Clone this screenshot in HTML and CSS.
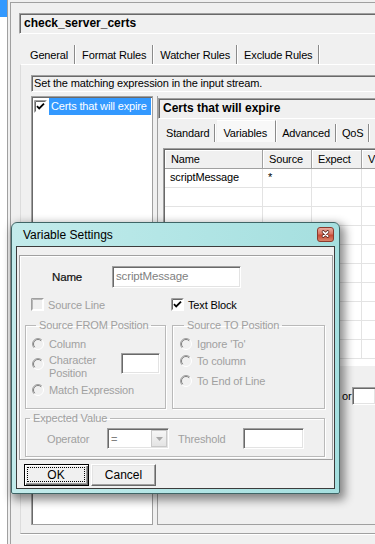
FILE: index.html
```html
<!DOCTYPE html>
<html>
<head>
<meta charset="utf-8">
<title>Variable Settings</title>
<link rel="stylesheet" href="styles.css">
</head>
<body>
<div class="app">
  <div class="side"><div class="side-sel"></div></div>
  <div class="main">
    <div class="title-field">check_server_certs</div>
    <div class="tabs">
      <div class="tab">General</div>
      <div class="tab">Format Rules</div>
      <div class="tab">Watcher Rules</div>
      <div class="tab">Exclude Rules</div>
    </div>
    <div class="page">
      <div class="hint">Set the matching expression in the input stream.</div>
      <div class="split">
        <div class="listbox">
          <div class="item">
            <svg class="cbx" width="13" height="13" viewBox="0 0 13 13"><rect width="13" height="13" fill="#fff"/><path d="M0.5 12.5V0.5H12.5" stroke="#a0a0a0" fill="none"/><path d="M1.5 11.5V1.5H11.5" stroke="#696969" fill="none"/><path d="M3 6.2L5.2 8.5L10 3.6" stroke="#000" stroke-width="1.8" fill="none"/></svg>
            <span class="sel">Certs that will expire</span>
          </div>
        </div>
        <div class="rpanel">
          <div class="rhead">Certs that will expire</div>
          <div class="rtabs">
            <div class="rtab">Standard</div>
            <div class="rtab active">Variables</div>
            <div class="rtab">Advanced</div>
            <div class="rtab">QoS</div>
          </div>
          <div class="grid">
            <div class="grow ghead"><div class="gc c1">Name</div><div class="gc c2">Source</div><div class="gc c3">Expect</div><div class="gc c4">V</div></div>
            <div class="grow"><div class="gc c1">scriptMessage</div><div class="gc c2">*</div><div class="gc c3"></div><div class="gc c4"></div></div>
            <div class="grow"><div class="gc c1"></div><div class="gc c2"></div><div class="gc c3"></div><div class="gc c4"></div></div>
            <div class="grow"><div class="gc c1"></div><div class="gc c2"></div><div class="gc c3"></div><div class="gc c4"></div></div>
            <div class="grow"><div class="gc c1"></div><div class="gc c2"></div><div class="gc c3"></div><div class="gc c4"></div></div>
            <div class="grow"><div class="gc c1"></div><div class="gc c2"></div><div class="gc c3"></div><div class="gc c4"></div></div>
            <div class="grow"><div class="gc c1"></div><div class="gc c2"></div><div class="gc c3"></div><div class="gc c4"></div></div>
            <div class="grow"><div class="gc c1"></div><div class="gc c2"></div><div class="gc c3"></div><div class="gc c4"></div></div>
            <div class="grow"><div class="gc c1"></div><div class="gc c2"></div><div class="gc c3"></div><div class="gc c4"></div></div>
            <div class="grow"><div class="gc c1"></div><div class="gc c2"></div><div class="gc c3"></div><div class="gc c4"></div></div>
            <div class="grow"><div class="gc c1"></div><div class="gc c2"></div><div class="gc c3"></div><div class="gc c4"></div></div>
          </div>
          <div class="or-row"><span>or</span><div class="field or-field"></div></div>
        </div>
      </div>
    </div>
  </div>
</div>

<div class="dialog">
  <div class="dtitle">
    <span class="dtitle-text">Variable Settings</span>
    <svg class="close" width="17" height="15" viewBox="0 0 17 15"><defs><linearGradient id="cg" x1="0" y1="0" x2="0" y2="1"><stop offset="0" stop-color="#eab0a4"/><stop offset="0.45" stop-color="#d87562"/><stop offset="0.55" stop-color="#c64a35"/><stop offset="1" stop-color="#dc8a70"/></linearGradient></defs><rect x="0.5" y="0.5" width="16" height="14" rx="2.5" fill="url(#cg)" stroke="#8a3b2e"/><path d="M6.3 4.8L10.7 9.2M10.7 4.8L6.3 9.2" stroke="#5a2219" stroke-width="3.2" stroke-linecap="round"/><path d="M6.3 4.8L10.7 9.2M10.7 4.8L6.3 9.2" stroke="#fff" stroke-width="1.7" stroke-linecap="round"/></svg>
  </div>
  <div class="client">
    <div class="dpanel">
      <div class="name-row">
        <span class="name-label">Name</span>
        <div class="field name-input">scriptMessage</div>
      </div>
      <div class="check-row">
        <div class="chk dis">
          <svg class="cbx" width="13" height="13" viewBox="0 0 13 13"><rect width="13" height="13" fill="#fff"/><path d="M0.5 12.5V0.5H12.5" stroke="#a0a0a0" fill="none"/><path d="M1.5 11.5V1.5H11.5" stroke="#b8b8b8" fill="none"/><rect x="2" y="2" width="9" height="9" fill="#f0f0f0"/></svg>
          <span>Source Line</span>
        </div>
        <div class="chk">
          <svg class="cbx" width="13" height="13" viewBox="0 0 13 13"><rect width="13" height="13" fill="#fff"/><path d="M0.5 12.5V0.5H12.5" stroke="#a0a0a0" fill="none"/><path d="M1.5 11.5V1.5H11.5" stroke="#696969" fill="none"/><path d="M3 6.2L5.2 8.5L10 3.6" stroke="#000" stroke-width="1.8" fill="none"/></svg>
          <span>Text Block</span>
        </div>
      </div>
      <div class="groups">
        <fieldset class="grp from">
          <legend>Source FROM Position</legend>
          <div class="opt o1">
            <svg class="radio" width="12" height="12" viewBox="0 0 12 12"><circle cx="6" cy="6" r="5" fill="#f0f0f0"/><path d="M9.9 2.1A5.5 5.5 0 0 0 2.1 9.9" fill="none" stroke="#a0a0a0"/><path d="M9.2 2.8A4.5 4.5 0 0 0 2.8 9.2" fill="none" stroke="#808080"/><path d="M2.1 9.9A5.5 5.5 0 0 0 9.9 2.1" fill="none" stroke="#fff"/></svg>
            <span>Column</span>
          </div>
          <div class="opt o2">
            <svg class="radio" width="12" height="12" viewBox="0 0 12 12"><circle cx="6" cy="6" r="5" fill="#f0f0f0"/><path d="M9.9 2.1A5.5 5.5 0 0 0 2.1 9.9" fill="none" stroke="#a0a0a0"/><path d="M9.2 2.8A4.5 4.5 0 0 0 2.8 9.2" fill="none" stroke="#808080"/><path d="M2.1 9.9A5.5 5.5 0 0 0 9.9 2.1" fill="none" stroke="#fff"/></svg>
            <span class="two">Character<br>Position</span>
            <div class="field char-input"></div>
          </div>
          <div class="opt o3">
            <svg class="radio" width="12" height="12" viewBox="0 0 12 12"><circle cx="6" cy="6" r="5" fill="#f0f0f0"/><path d="M9.9 2.1A5.5 5.5 0 0 0 2.1 9.9" fill="none" stroke="#a0a0a0"/><path d="M9.2 2.8A4.5 4.5 0 0 0 2.8 9.2" fill="none" stroke="#808080"/><path d="M2.1 9.9A5.5 5.5 0 0 0 9.9 2.1" fill="none" stroke="#fff"/></svg>
            <span>Match Expression</span>
          </div>
        </fieldset>
        <fieldset class="grp to">
          <legend>Source TO Position</legend>
          <div class="opt t1">
            <svg class="radio" width="12" height="12" viewBox="0 0 12 12"><circle cx="6" cy="6" r="5" fill="#f0f0f0"/><path d="M9.9 2.1A5.5 5.5 0 0 0 2.1 9.9" fill="none" stroke="#a0a0a0"/><path d="M9.2 2.8A4.5 4.5 0 0 0 2.8 9.2" fill="none" stroke="#808080"/><path d="M2.1 9.9A5.5 5.5 0 0 0 9.9 2.1" fill="none" stroke="#fff"/></svg>
            <span>Ignore 'To'</span>
          </div>
          <div class="opt t2">
            <svg class="radio" width="12" height="12" viewBox="0 0 12 12"><circle cx="6" cy="6" r="5" fill="#f0f0f0"/><path d="M9.9 2.1A5.5 5.5 0 0 0 2.1 9.9" fill="none" stroke="#a0a0a0"/><path d="M9.2 2.8A4.5 4.5 0 0 0 2.8 9.2" fill="none" stroke="#808080"/><path d="M2.1 9.9A5.5 5.5 0 0 0 9.9 2.1" fill="none" stroke="#fff"/></svg>
            <span>To column</span>
          </div>
          <div class="opt t3">
            <svg class="radio" width="12" height="12" viewBox="0 0 12 12"><circle cx="6" cy="6" r="5" fill="#f0f0f0"/><path d="M9.9 2.1A5.5 5.5 0 0 0 2.1 9.9" fill="none" stroke="#a0a0a0"/><path d="M9.2 2.8A4.5 4.5 0 0 0 2.8 9.2" fill="none" stroke="#808080"/><path d="M2.1 9.9A5.5 5.5 0 0 0 9.9 2.1" fill="none" stroke="#fff"/></svg>
            <span>To End of Line</span>
          </div>
        </fieldset>
      </div>
      <fieldset class="grp expected">
        <legend>Expected Value</legend>
        <div class="exp-row">
          <span class="op-label">Operator</span>
          <div class="field combo"><span class="combo-val">=</span><span class="combo-btn"><svg width="7" height="4" viewBox="0 0 7 4"><path d="M0 0H7L3.5 4Z" fill="#a8a8a8"/></svg></span></div>
          <span class="th-label">Threshold</span>
          <div class="field th-input"></div>
        </div>
      </fieldset>
    </div>
    <div class="buttons">
      <div class="btn default"><div class="focus">OK</div></div>
      <div class="btn">Cancel</div>
    </div>
  </div>
</div>
</body>
</html>
```
FILE: styles.css
```css
* { box-sizing: border-box; }
html, body { margin: 0; padding: 0; }
body {
  width: 375px;
  height: 544px;
  overflow: hidden;
  position: relative;
  background: #f0f0f0;
  font-family: "Liberation Sans", Arial, sans-serif;
  font-size: 11px;
  letter-spacing: -0.15px;
  color: #000;
}

.app { display: flex; height: 544px; width: 375px; overflow: hidden; }
.side { width: 8px; flex: none; background: #fff; border-right: 1px solid #a0a0a0; }
.side-sel { height: 17px; background: #3399ff; }

.main {
  flex: 1;
  min-width: 0;
  margin: 2px 0 0 2px;
  border-left: 1px solid #a0a0a0;
  border-top: 1px solid #a0a0a0;
  display: flex;
  flex-direction: column;
  overflow: hidden;
}

.title-field {
  margin: 10px 0 0 8px;
  height: 21px;
  border-top: 1px solid #a0a0a0;
  border-left: 1px solid #a0a0a0;
  border-bottom: 1px solid #fff;
  box-shadow: inset 1px 1px 0 #696969;
  font-size: 12px;
  font-weight: bold;
  letter-spacing: 0;
  line-height: 19px;
  padding-left: 4px;
}

.tabs { display: flex; margin-top: 11px; height: 19px; padding-left: 12px; }
.tab {
  line-height: 20px;
  padding: 0 6px 0 7px;
  border-right: 1px solid #8a8a8a;
  box-shadow: 1px 0 0 #fff;
  white-space: nowrap;
}

.page {
  height: 470px;
  flex: none;
  margin-left: 9px;
  border-left: 1px solid #dcdcdc;
  border-top: 1px solid #fff;
  border-bottom: 1px solid #a0a0a0;
  box-shadow: 0 1px 0 #fff;
  display: flex;
  flex-direction: column;
}

.hint {
  margin: 10px 0 0 10px;
  height: 17px;
  border-top: 1px solid #a0a0a0;
  border-left: 1px solid #a0a0a0;
  border-bottom: 1px solid #fff;
  box-shadow: inset 1px 1px 0 #696969;
  line-height: 15px;
  padding-left: 2px;
  white-space: nowrap;
  overflow: hidden;
}

.split { display: flex; margin: 4px 0 0 10px; height: 429px; }

.listbox {
  width: 122px;
  flex: none;
  background: #fff;
  border: 1px solid #a0a0a0;
  box-shadow: inset 1px 1px 0 #696969;
  padding: 1px 1px 0 2px;
}
.item { display: flex; align-items: center; height: 17px; }
.item .cbx { flex: none; }
.sel {
  flex: 1;
  margin-left: 2px;
  height: 17px;
  line-height: 17px;
  padding: 0 2px;
  background: #3399ff;
  color: #fff;
  white-space: nowrap;
}

.rpanel {
  flex: 1;
  min-width: 0;
  margin-left: 4px;
  border-left: 1px solid #a0a0a0;
  border-bottom: 1px solid #a0a0a0;
  display: flex;
  flex-direction: column;
}
.rhead {
  margin: 2px 0 0 0;
  height: 21px;
  border-top: 1px solid #a0a0a0;
  border-left: 1px solid #a0a0a0;
  border-bottom: 1px solid #fff;
  box-shadow: inset 1px 1px 0 #696969;
  font-size: 12px;
  font-weight: bold;
  letter-spacing: 0;
  line-height: 19px;
  padding-left: 4px;
  white-space: nowrap;
}
.rtabs { display: flex; align-items: flex-end; height: 23px; padding-left: 2px; overflow: hidden; }
.rtab {
  flex: none;
  height: 18px;
  line-height: 18px;
  padding: 0 5px 0 6px;
  border-right: 1px solid #8a8a8a;
  box-shadow: 1px 0 0 #fff;
  white-space: nowrap;
}
.rtab.active {
  height: 22px;
  line-height: 24px;
  margin-left: 2px;
  padding: 0 8px 0 6px;
  background: #f8f8f8;
  border-top: 1px solid #fff;
}

.grid {
  margin: 6px 0 0 5px;
  height: 218px;
  flex: none;
  background: #fff;
  border-top: 1px solid #a0a0a0;
  border-left: 1px solid #a0a0a0;
  border-bottom: 1px solid #fff;
  box-shadow: inset 1px 1px 0 #696969;
  padding: 1px 0 0 1px;
  overflow: hidden;
}
.grow { display: flex; height: 19px; border-bottom: 1px solid #e3e3e3; }
.gc {
  flex: none;
  height: 100%;
  border-right: 1px solid #e3e3e3;
  line-height: 17px;
  padding-left: 5px;
  white-space: nowrap;
  overflow: hidden;
}
.c1 { width: 98px; }
.c2 { width: 49px; }
.c3 { width: 50px; }
.c4 { flex: 1; min-width: 0; border-right: 0; }
.ghead { background: #f0f0f0; border-bottom: 1px solid #a0a0a0; }
.ghead .gc { border-right: 1px solid #a0a0a0; padding-left: 6px; line-height: 18px; box-shadow: inset 1px 1px 0 #fff; }
.ghead .c4 { border-right: 0; }

.or-row { display: flex; align-items: center; margin: 21px 0 0 184px; }
.or-row span { width: 10px; flex: none; }

.field {
  background: #fff;
  border-top: 1px solid #a0a0a0;
  border-left: 1px solid #a0a0a0;
  border-bottom: 1px solid #fff;
  border-right: 1px solid #fff;
  box-shadow: inset 1px 1px 0 #696969, inset -1px -1px 0 #e3e3e3;
}
.or-field { flex: 1; min-width: 0; height: 18px; border-right: 0; }

/* Dialog (floating window over the main form) */
.dialog {
  position: absolute;
  left: 11px;
  top: 222px;
  width: 329px;
  height: 272px;
  border: 1px solid #3f6566;
  border-radius: 6px 6px 2px 2px;
  background: linear-gradient(90deg, #c3ebeb 0%, #b4e6e6 45%, #a5dfdf 100%);
  box-shadow: 3px 4px 10px 2px rgba(0, 0, 0, 0.45);
  padding: 0 4px 4px 4px;
  display: flex;
  flex-direction: column;
}
.dtitle {
  height: 23px;
  flex: none;
  display: flex;
  align-items: center;
  padding-left: 7px;
  font-size: 12px;
  letter-spacing: 0;
}
.dtitle-text { flex: 1; }
.close { flex: none; margin-right: 1px; }

.client {
  height: 243px;
  flex: none;
  background: #f0f0f0;
  border: 1px solid #3c3c3c;
  display: flex;
  flex-direction: column;
}
.dpanel {
  margin: 8px 1px 0 2px;
  height: 205px;
  flex: none;
  border: 1px solid #a0a0a0;
  box-shadow: inset 1px 1px 0 #fff;
  display: flex;
  flex-direction: column;
}
.name-row { display: flex; align-items: center; margin-top: 10px; padding-left: 32px; }
.name-label { width: 60px; font-size: 11.5px; color: #111; -webkit-text-stroke: 0.2px #111; }
.name-input {
  width: 129px;
  height: 22px;
  color: #808080;
  line-height: 19px;
  padding-left: 3px;
  font-size: 11.5px;
}

.check-row { display: flex; margin-top: 10px; padding-left: 11px; height: 13px; }
.chk { display: flex; align-items: center; height: 13px; }
.chk .cbx { flex: none; margin-right: 4px; }
.chk.dis { width: 140px; color: #a0a0a0; }

.groups { display: flex; gap: 6px; margin-top: 8px; padding-left: 5px; }
.grp {
  margin: 0;
  padding: 0;
  min-width: 0;
  border: 1px solid #b9b9b9;
  box-shadow: inset 1px 1px 0 #fff, 1px 1px 0 #fff;
  color: #a0a0a0;
}
.grp legend { margin-left: 4px; padding: 0 3px; line-height: 13px; }
.from { width: 141px; height: 90px; padding-left: 6px; }
.to { width: 153px; height: 90px; padding-left: 7px; }
.expected { width: 300px; height: 45px; margin: 3px 0 0 5px; }

.opt { display: flex; align-items: center; height: 13px; white-space: nowrap; }
.opt .radio { flex: none; margin-right: 5px; }
.o1 { margin-top: 5px; }
.o2 { margin-top: 3px; height: 27px; align-items: flex-start; }
.o2 .radio { margin-top: 5px; }
.o2 .two { width: 72px; padding-top: 1px; line-height: 13px; }
.char-input { width: 39px; height: 21px; flex: none; }
.o3 { margin-top: 3px; }
.t1 { margin-top: 5px; }
.t2 { margin-top: 4px; }
.t3 { margin-top: 7px; }

.exp-row { display: flex; align-items: center; margin-top: 3px; padding-left: 21px; }
.op-label { width: 60px; }
.combo { width: 62px; height: 21px; display: flex; align-items: center; flex: none; }
.combo-val { flex: 1; padding-left: 3px; color: #808080; }
.combo-btn {
  width: 16px;
  height: 17px;
  margin-right: 1px;
  background: linear-gradient(#f6f6f6, #e4e4e4);
  border: 1px solid #c9c9c9;
  display: flex;
  align-items: center;
  justify-content: center;
}
.th-label { width: 65px; margin-left: 9px; }
.th-input { width: 61px; height: 21px; flex: none; }

.buttons { display: flex; gap: 2px; margin-top: 4px; padding-left: 7px; }
.btn {
  width: 65px;
  height: 22px;
  background: #f0f0f0;
  border: 1px solid;
  border-color: #fff #696969 #696969 #fff;
  box-shadow: inset -1px -1px 0 #a0a0a0, inset 1px 1px 0 #e3e3e3;
  display: flex;
  align-items: center;
  justify-content: center;
  font-size: 12px;
  letter-spacing: 0;
}
.btn.default {
  border-color: #000;
  box-shadow: inset 1px 1px 0 #fff, inset -1px -1px 0 #696969, inset -2px -2px 0 #a0a0a0;
  padding: 2px 3px 3px 2px;
  align-items: stretch;
}
.focus {
  flex: 1;
  border: 1px dotted #000;
  display: flex;
  align-items: center;
  justify-content: center;
}
```
